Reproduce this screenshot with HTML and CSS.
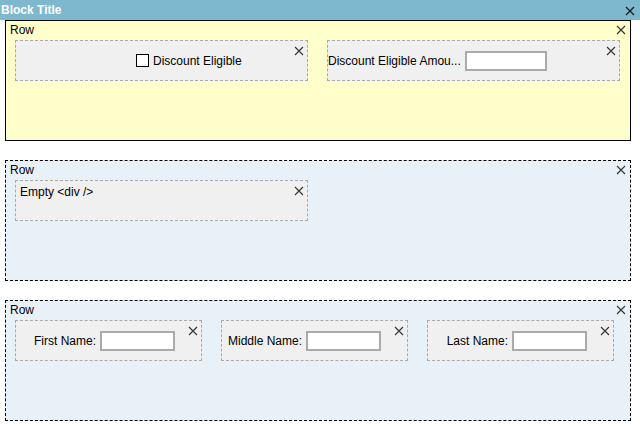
FILE: index.html
```html
<!DOCTYPE html>
<html>
<head>
<meta charset="utf-8">
<link rel="stylesheet" href="styles.css">
</head>
<body>
<div class="titlebar">
  <span class="title">Block Title</span>
  <svg class="x x-title" width="10" height="10" viewBox="0 0 10 10"><path d="M1 1L9 9M9 1L1 9"/></svg>
</div>

<div class="block block-solid">
  <div class="row-label">Row</div>
  <svg class="x x-row" width="10" height="10" viewBox="0 0 10 10"><path d="M1 1L9 9M9 1L1 9"/></svg>
  <div class="cells">
    <div class="cell cell-wide cell-check">
      <span class="checkbox"></span>
      <span class="check-label">Discount Eligible</span>
      <svg class="x x-cell" width="10" height="10" viewBox="0 0 10 10"><path d="M1 1L9 9M9 1L1 9"/></svg>
    </div>
    <div class="cell cell-wide cell-amount">
      <span class="amount-label">Discount Eligible Amou...</span>
      <span class="input input-amount"></span>
      <svg class="x x-cell" width="10" height="10" viewBox="0 0 10 10"><path d="M1 1L9 9M9 1L1 9"/></svg>
    </div>
  </div>
</div>

<div class="block block-dashed">
  <div class="row-label">Row</div>
  <svg class="x x-row" width="10" height="10" viewBox="0 0 10 10"><path d="M1 1L9 9M9 1L1 9"/></svg>
  <div class="cells">
    <div class="cell cell-wide cell-empty">
      <span>Empty &lt;div /&gt;</span>
      <svg class="x x-cell" width="10" height="10" viewBox="0 0 10 10"><path d="M1 1L9 9M9 1L1 9"/></svg>
    </div>
  </div>
</div>

<div class="block block-dashed">
  <div class="row-label">Row</div>
  <svg class="x x-row" width="10" height="10" viewBox="0 0 10 10"><path d="M1 1L9 9M9 1L1 9"/></svg>
  <div class="cells">
    <div class="cell cell-narrow cell-field">
      <span class="field-label">First Name:</span>
      <span class="input input-name"></span>
      <svg class="x x-cell" width="10" height="10" viewBox="0 0 10 10"><path d="M1 1L9 9M9 1L1 9"/></svg>
    </div>
    <div class="cell cell-narrow cell-field">
      <span class="field-label">Middle Name:</span>
      <span class="input input-name"></span>
      <svg class="x x-cell" width="10" height="10" viewBox="0 0 10 10"><path d="M1 1L9 9M9 1L1 9"/></svg>
    </div>
    <div class="cell cell-narrow cell-field">
      <span class="field-label">Last Name:</span>
      <span class="input input-name"></span>
      <svg class="x x-cell" width="10" height="10" viewBox="0 0 10 10"><path d="M1 1L9 9M9 1L1 9"/></svg>
    </div>
  </div>
</div>
</body>
</html>
```
FILE: styles.css
```css
* { box-sizing: border-box; }
html, body {
  margin: 0;
  padding: 0;
  background: #ffffff;
  font-family: "Liberation Sans", Arial, sans-serif;
  font-size: 12px;
  line-height: 16px;
  color: #000;
}
.titlebar {
  position: relative;
  height: 20px;
  background: #7eb8cf;
  padding: 2px 0 0 1px;
}
.title {
  color: #ffffff;
  font-weight: bold;
}
.x path {
  stroke: #333;
  stroke-width: 1.1;
  fill: none;
}
.x { position: absolute; display: block; }
.x-title { top: 6px; right: 5px; }
.x-title path { stroke: #1a1a1a; stroke-width: 1.3; }
.block {
  position: relative;
  margin-left: 5px;
  width: 626px;
  height: 121px;
}
.block + .block { margin-top: 19px; }
.block-solid {
  border: 1px solid #000;
  background: #ffffcc;
}
.block-dashed {
  border: 1px dashed #000;
  background: #e9f1f8;
}
.row-label {
  height: 16px;
  padding-left: 4px;
  padding-top: 1px;
}
.x-row { top: 4px; right: 4px; }
.cells {
  display: flex;
  gap: 19px;
  margin-top: 3px;
  margin-left: 9px;
}
.cell {
  position: relative;
  height: 41px;
  background: #f0f0f0;
  border: 1px dashed #aaaaaa;
  display: flex;
  align-items: center;
}
.cell-wide { width: 293px; }
.cell-narrow { width: 187px; }
.x-cell { top: 5px; right: 3px; }
.cell-check { padding-left: 120px; }
.checkbox {
  width: 13px;
  height: 13px;
  border: 1px solid #000;
  background: #fff;
  margin-right: 4px;
}
.cell-amount { padding-left: 0; }
.amount-label {
  width: 137px;
  white-space: nowrap;
}
.input {
  display: block;
  height: 20px;
  background: #fff;
  border: 2px solid #aaaaaa;
}
.input-amount { width: 82px; }
.input-name { width: 75px; }
.cell-empty {
  align-items: flex-start;
  padding: 3px 4px;
}
.cell-field { padding-left: 4px; }
.field-label {
  width: 76px;
  text-align: right;
  white-space: nowrap;
  margin-right: 4px;
}
```
